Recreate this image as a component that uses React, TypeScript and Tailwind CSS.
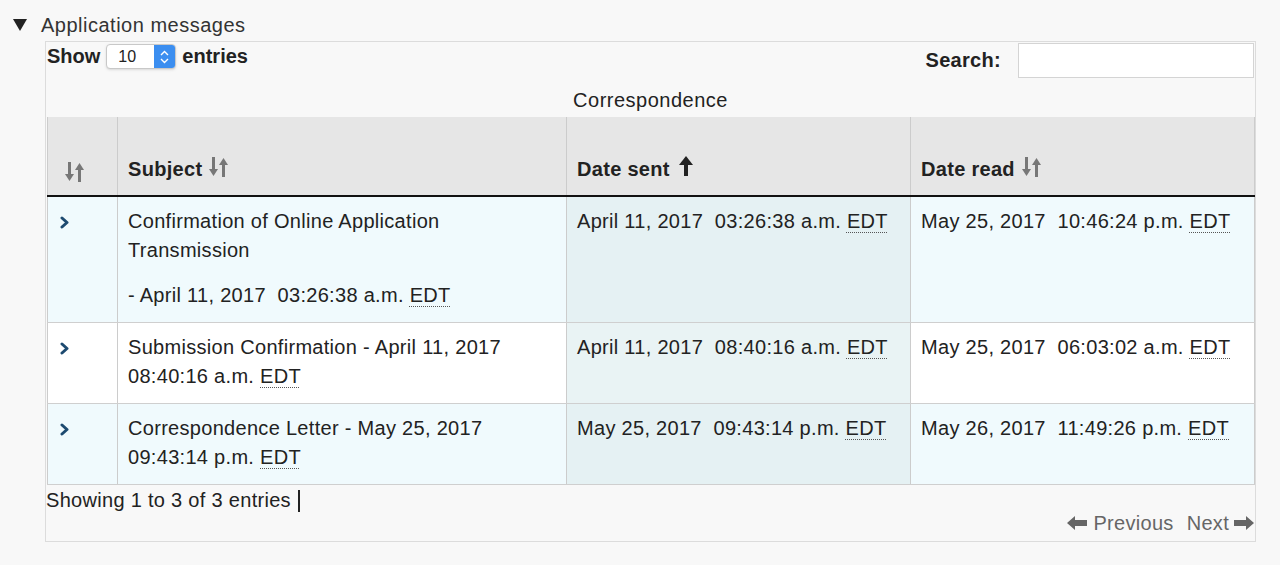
import React from "react";

const font = { fontFamily: '"Liberation Sans", Arial, Helvetica, sans-serif' };

function SortBoth() {
  return (
    <svg width="20" height="22" viewBox="0 0 20 22" className="inline-block">
      <rect x="3" y="1" width="3" height="13" fill="#777" />
      <polygon points="0,13 9,13 4.5,20" fill="#777" />
      <polygon points="10,9 19,9 14.5,2" fill="#777" />
      <rect x="13" y="8" width="3" height="13" fill="#777" />
    </svg>
  );
}

function SortUp() {
  return (
    <svg width="14" height="20" viewBox="0 0 14 20" className="inline-block">
      <polygon points="0,9 14,9 7,0" fill="#222" />
      <rect x="5" y="8" width="4" height="12" fill="#222" />
    </svg>
  );
}

function Chevron() {
  return (
    <svg width="9" height="13" viewBox="0 0 9 13">
      <path d="M2 2 L7 6.5 L2 11" stroke="#1d4a70" strokeWidth="3" fill="none" strokeLinecap="round" strokeLinejoin="round" />
    </svg>
  );
}

function Edt() {
  return (
    <abbr
      title="Eastern Daylight Time"
      className="underline decoration-dotted decoration-[#555] decoration-1 underline-offset-[4px]"
    >
      EDT
    </abbr>
  );
}

type Row = { subject: React.ReactNode; sent: string; read: string };

const rows: Row[] = [
  {
    subject: (
      <>
        <p>Confirmation of Online Application Transmission</p>
        <p className="mt-[16px]">
          - April 11, 2017{"\u00a0"} 03:26:38 a.m. <Edt />
        </p>
      </>
    ),
    sent: "April 11, 2017\u00a0 03:26:38 a.m. ",
    read: "May 25, 2017\u00a0 10:46:24 p.m. ",
  },
  {
    subject: (
      <p>
        Submission Confirmation - April 11, 2017 08:40:16 a.m. <Edt />
      </p>
    ),
    sent: "April 11, 2017\u00a0 08:40:16 a.m. ",
    read: "May 25, 2017\u00a0 06:03:02 a.m. ",
  },
  {
    subject: (
      <p>
        Correspondence Letter - May 25, 2017 09:43:14 p.m. <Edt />
      </p>
    ),
    sent: "May 25, 2017\u00a0 09:43:14 p.m. ",
    read: "May 26, 2017\u00a0 11:49:26 p.m. ",
  },
];

export default function App() {
  return (
    <div className="h-[565px] bg-[#f8f8f8] text-[#222] pl-[13px] pt-[11px] tracking-[0.3px]" style={font}>
      <div className="flex items-center h-[28px] text-[20px] text-[#333] tracking-[0.5px]">
        <svg width="14" height="12" viewBox="0 0 14 12" className="mr-[14px]">
          <polygon points="0,0 14,0 7,12" fill="#222" />
        </svg>
        <span>Application messages</span>
      </div>

      <div className="ml-[32px] mt-[2px] w-[1211px] h-[501px] border border-[#dcdcdc] bg-[#f8f8f8]">
        <div className="flex justify-between h-[37px]">
          <div className="flex items-start pt-[1px] pl-[1px] text-[20px] font-bold tracking-normal">
            <span className="leading-[26px]">Show</span>
            <div className="ml-[6px] mt-[1px] flex h-[25px] w-[70px] rounded-[4px] border border-[#c8c8c8] bg-white shadow-sm overflow-hidden">
              <span className="flex-1 pl-[11px] text-[16px] font-normal leading-[23px]">10</span>
              <div className="w-[21px] bg-[#3b8ef0] flex flex-col items-center justify-center gap-[2px]">
                <svg width="9" height="6" viewBox="0 0 9 6">
                  <path d="M1 5 L4.5 1.5 L8 5" stroke="#fff" strokeWidth="1.4" fill="none" />
                </svg>
                <svg width="9" height="6" viewBox="0 0 9 6">
                  <path d="M1 1 L4.5 4.5 L8 1" stroke="#fff" strokeWidth="1.4" fill="none" />
                </svg>
              </div>
            </div>
            <span className="ml-[6px] leading-[26px]">entries</span>
          </div>
          <div className="flex items-start pt-[1px] pr-[1px]">
            <span className="text-[20px] font-bold leading-[35px] mr-[17px]">Search:</span>
            <input className="w-[236px] h-[35px] bg-white border border-[#d4d4d4] outline-none px-2 text-[18px]" />
          </div>
        </div>

        <div className="h-[38px] pt-[8px] text-center text-[20px] leading-[26px] tracking-[0.5px]">Correspondence</div>

        <div className="ml-[1px] w-[1208px] text-[20px]">
          <div className="grid grid-cols-[70px_449px_344px_345px] bg-[#e6e6e6] border-b-2 border-[#111] h-[80px] font-bold">
            <div className="border-l border-[#ccc] flex items-end justify-center pb-[12px] pr-[16px]">
              <SortBoth />
            </div>
            <div className="border-l border-[#ccc] flex items-end pl-[10px] pb-[11px] leading-[30px]">
              <span>Subject</span>
              <span className="ml-[7px] mb-[4px]">
                <SortBoth />
              </span>
            </div>
            <div className="border-l border-[#ccc] flex items-end pl-[10px] pb-[11px] leading-[30px]">
              <span>Date sent</span>
              <span className="ml-[9px] mb-[5px]">
                <SortUp />
              </span>
            </div>
            <div className="border-l border-r border-[#ccc] flex items-end pl-[10px] pb-[11px] leading-[30px]">
              <span>Date read</span>
              <span className="ml-[7px] mb-[4px]">
                <SortBoth />
              </span>
            </div>
          </div>

          {rows.map((r, i) => {
            const odd = i % 2 === 0;
            return (
              <div
                key={i}
                className={`grid grid-cols-[70px_449px_344px_345px] border-b border-[#cfcfcf] leading-[29px] ${
                  odd ? "bg-[#f0fafd]" : "bg-white"
                }`}
              >
                <div className="border-l border-[#ccc] pl-[12px] pt-[19px]">
                  <Chevron />
                </div>
                <div className="border-l border-[#ccc] pl-[10px] pr-[10px] pt-[10px] pb-[12px]">{r.subject}</div>
                <div className={`border-l border-[#ccc] pl-[10px] pt-[10px] ${odd ? "bg-[#e5f1f3]" : "bg-[#e9f3f4]"}`}>
                  {r.sent}
                  <Edt />
                </div>
                <div className="border-l border-r border-[#ccc] pl-[10px] pt-[10px]">
                  {r.read}
                  <Edt />
                </div>
              </div>
            );
          })}
        </div>

        <div className="text-[20px] leading-[28px] pt-[1px]">
          Showing 1 to 3 of 3 entries <span className="inline-block w-[2px] h-[22px] bg-[#222] align-middle ml-[1px] -mt-[2px]" />
        </div>
        <div className="flex justify-end pr-[1px] text-[20px] leading-[24px] text-[#666] mt-[-3px]">
          <span className="flex items-center">
            <svg width="20" height="16" viewBox="0 0 20 16" className="mr-[6px]">
              <polygon points="0,8 8,1 8,5 20,5 20,11 8,11 8,15" fill="#666" />
            </svg>
            Previous
          </span>
          <span className="flex items-center ml-[13px]">
            Next
            <svg width="20" height="16" viewBox="0 0 20 16" className="ml-[5px]">
              <polygon points="20,8 12,1 12,5 0,5 0,11 12,11 12,15" fill="#666" />
            </svg>
          </span>
        </div>
      </div>
    </div>
  );
}
